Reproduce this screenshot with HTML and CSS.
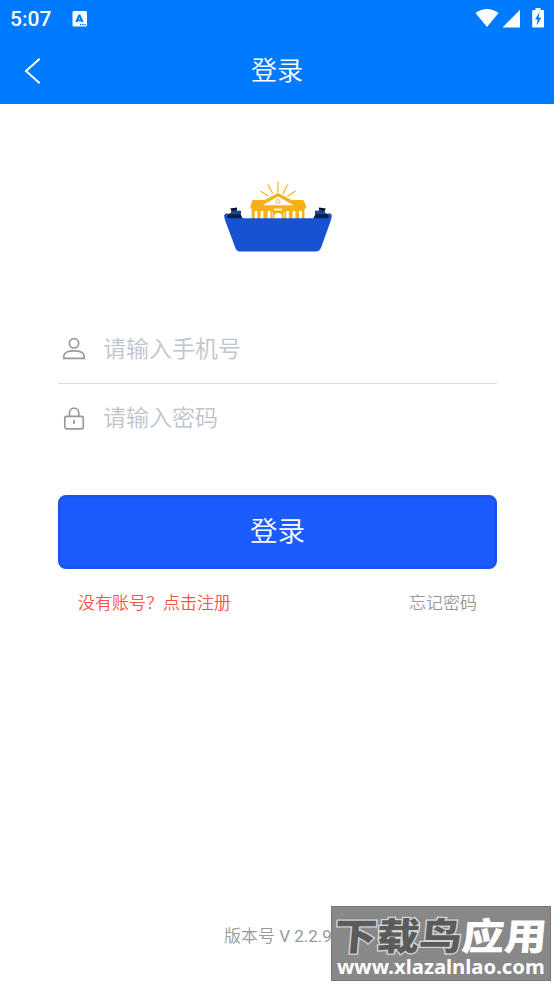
FILE: index.html
```html
<!DOCTYPE html>
<html lang="zh-CN">
  <head>
    <meta charset="UTF-8" />
    <meta name="viewport" content="width=device-width, initial-scale=1.0" />
    <title>登录</title>
    <link rel="stylesheet" href="styles.css">
  </head>
  <body>
    <header class="header">
      <div class="status-bar">
        <span class="time">5:07</span>
        <svg class="status-app" width="16" height="17" viewBox="0 0 16 17">
          <rect x="0.5" y="0" width="14.5" height="15.5" rx="1.5" fill="#fff" />
          <path d="M4.2 11.2L7.4 4L10.6 11.2M5.3 9.2H9.5" fill="none" stroke="#007aff" stroke-width="2" stroke-linejoin="bevel" />
          <path d="M8 13.7H14" stroke="#007aff" stroke-width="1.2" stroke-dasharray="1.4 0.8" />
        </svg>
        <svg class="status-icons" width="70" height="22" viewBox="0 0 70 22">
          <path d="M0.5 5Q12 -3 23.5 5L12 19Z" fill="#fff" />
          <path d="M45 1.7V19.5H27.5Z" fill="#fff" />
          <path d="M60.5 0H65.5V2H68Q69 2 69 3V18.5Q69 19.5 68 19.5H58.2Q57.2 19.5 57.2 18.5V3Q57.2 2 58.2 2H60.5Z" fill="#fff" />
          <path d="M64.6 4L60 11.5H62.6L61.6 17.5L66.3 9.7H63.6Z" fill="#007aff" />
        </svg>
      </div>
      <div class="nav-bar">
        <a class="back" href="#" aria-label="返回">
          <svg width="18" height="28" viewBox="0 0 18 28">
            <path d="M15.7 1.7L2 14L15.7 26.3" fill="none" stroke="#fff" stroke-width="2" />
          </svg>
        </a>
        <h1 class="title">登录</h1>
      </div>
    </header>

    <main class="login">
      <svg class="logo" width="110" height="74" viewBox="0 0 110 74">
        <!-- sun rays -->
        <path d="M55 2V12.5M45 4.5L49.8 13.5M64.8 4.5L60 13.5M37.5 11L45.5 16.3M72.5 11L64.5 16.3" stroke="#f7b519" stroke-width="1.2" fill="none" />
        <!-- building -->
        <path d="M27.5 26L29.5 20H41.5L55 13L68.5 20H80.5L83 26V28.5H81.5V40H28.7V28.5H27.5Z" fill="#f7b015" />
        <path d="M39.5 25.2L55 16.6L70.7 25.2Z" fill="#fff" />
        <circle cx="55" cy="21.5" r="2" fill="#fff" stroke="#f7b519" stroke-width="0.9" />
        <path d="M33 31V39M39 31V39M46 31V39M64.5 31V39M71 31V39M77.5 31V39" stroke="#fff" stroke-width="2.7" />
        <path d="M51 29.5H59" stroke="#fff" stroke-width="1.8" />
        <path d="M51.3 39V36Q51.3 33 55 33Q58.8 33 58.8 36V39Z" fill="#fff" />
        <path d="M49.2 32V39M61 32V39" stroke="#fff" stroke-width="0.8" />
        <!-- scroll ends -->
        <path d="M2.5 37Q4 33 10 33L17.5 34L20 39H2.5Z M107.5 37Q106 33 100 33L92.5 34L90 39H107.5Z" fill="#0b2147" />
        <path d="M8 30.2L18 30.8V34L8 34.5Z M102 30.2L92 30.8V34L102 34.5Z" fill="#1544a4" />
        <path d="M7 28.5L14 27.5V30.5L9 31Z M103 28.5L96 27.5V30.5L101 31Z" fill="#080d24" />
        <path d="M1.3 35Q2 32.8 5 33.3Q2.5 38.2 7 38.2H103Q107.5 38.2 105 33.3Q108 32.8 108.7 35Q109 37 108 40L98.3 67Q96.5 71.5 93 71.5H17Q13.5 71.5 12 67L2 40Q1 37 1.3 35Z" fill="#1652d1" />
      </svg>

      <form class="form">
        <label class="field field-phone">
          <svg class="field-icon" width="24" height="24" viewBox="0 0 24 24">
            <circle cx="12" cy="6.3" r="4.7" />
            <path d="M1.8 21.4V18.8C2.3 15.8 6 13.9 12 13.9S21.7 15.8 22.2 18.8V21.4Z" />
          </svg>
          <input type="text" placeholder="请输入手机号" />
        </label>
        <label class="field field-password">
          <svg class="field-icon" width="24" height="24" viewBox="0 0 24 24">
            <rect x="2.8" y="9.3" width="18.5" height="12.5" rx="2" />
            <path d="M7.5 9.3V5.8A4.6 4.6 0 0 1 16.7 5.8V9.3M12 12.8V17" />
          </svg>
          <input type="password" placeholder="请输入密码" />
        </label>
        <button class="btn" type="button">登录</button>
      </form>

      <div class="links">
        <a class="register" href="#">没有账号？点击注册</a>
        <a class="forgot" href="#">忘记密码</a>
      </div>
    </main>

    <footer class="version">版本号 <span class="number">V 2.2.9</span></footer>

    <div class="watermark">
      <div class="watermark-name">
        <span class="name-dark">下载鸟</span><span class="name-light">应用</span>
      </div>
      <div class="watermark-url">www.xlazalnlao.com</div>
    </div>
  </body>
</html>
```
FILE: styles.css
```css
* {
  box-sizing: border-box;
  margin: 0;
}

body {
  display: flex;
  flex-direction: column;
  height: 984px;
  overflow: hidden;
  background-color: #fff;
  font-family: Roboto, "Noto Sans CJK SC", sans-serif;
  font-weight: 350;
}

a {
  text-decoration: none;
}

.header {
  height: 104px;
  background-color: #007aff;
  color: #fff;
}

.status-bar {
  display: flex;
  align-items: center;
  height: 38px;
  padding: 0 9px 0 10px;
}

.time {
  width: 62px;
  font-size: 21px;
  font-weight: 500;
}

.status-icons {
  margin-left: auto;
}

.nav-bar {
  display: grid;
  grid-template-columns: 60px 1fr 60px;
  align-items: center;
  height: 66px;
}

.back {
  display: flex;
  padding-left: 24px;
}

.title {
  font-size: 26px;
  font-weight: 350;
  line-height: 64px;
  text-align: center;
}

.login {
  display: flex;
  flex-direction: column;
  padding: 76px 57px 0 58px;
}

.logo {
  align-self: center;
}

.form {
  display: flex;
  flex-direction: column;
  margin-top: 60px;
}

.field {
  display: flex;
  align-items: center;
  height: 70px;
  padding-left: 4px;
}

.field-phone {
  border-bottom: 1px solid #dcdde0;
}

.field-icon {
  flex: none;
  fill: none;
  stroke: #999;
  stroke-width: 1.7;
}

.field input {
  width: 380px;
  height: 40px;
  margin-left: 17px;
  padding: 0;
  border: none;
  outline: none;
  background: none;
  font-family: inherit;
  font-size: 23px;
  font-weight: 350;
}

.field-phone input {
  padding-top: 2px;
}

.field-password input {
  padding-bottom: 1px;
}

.field input::placeholder {
  color: #c0c4cc;
}

.btn {
  height: 74px;
  margin-top: 41px;
  padding-bottom: 7px;
  border: 3px solid #1a54e8;
  border-radius: 8px;
  background-color: #1c5cff;
  color: #fff;
  font-family: inherit;
  font-size: 27.5px;
  font-weight: 350;
}

.links {
  display: flex;
  justify-content: space-between;
  margin-top: 21px;
  padding: 0 20px;
  font-size: 17px;
  line-height: 26px;
}

.register {
  color: #fa5340;
}

.forgot {
  color: #999;
}

.version {
  margin-top: auto;
  padding: 0 0 35px 224px;
  color: #999;
  font-size: 17px;
  line-height: 26px;
}

.number {
  font-weight: 400;
}

.watermark {
  position: absolute;
  left: 331px;
  top: 906px;
  width: 220px;
  height: 75px;
  border: 1px solid #777;
  background-color: #888;
  white-space: nowrap;
}

.watermark-name {
  display: flex;
  height: 48px;
  padding-left: 3px;
  font-family: "Noto Sans CJK SC", sans-serif;
  font-size: 42.5px;
  font-weight: 900;
  line-height: 55px;
  transform: skewX(-5deg) scaleY(0.88);
  paint-order: stroke;
}

.name-dark {
  color: #5b5b5b;
  -webkit-text-stroke: 3px #d2d2d2;
}

.name-light {
  color: #fff;
}

.watermark-url {
  padding-left: 5px;
  color: #fff;
  font-family: "Noto Sans", sans-serif;
  font-size: 20.3px;
  font-weight: 700;
  line-height: 22px;
}
```
